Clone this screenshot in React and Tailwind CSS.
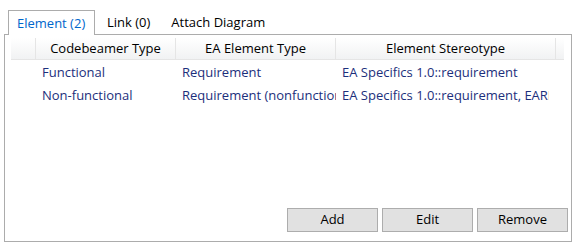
export default function App() {
  const font = { fontFamily: '"Open Sans", "Noto Sans", sans-serif' };
  return (
    <div className="w-[576px] h-[242px] bg-white text-[13px] text-black overflow-hidden flex flex-col" style={font}>
      <div className="flex items-end h-[34px] pl-[8px] relative z-10">
        <div className="w-[87px] h-[25px] border border-b-0 border-[#acacac] bg-white flex items-center pl-[8px] pt-[2px] text-[#0066cc] -mb-[1px]">Element (2)</div>
        <div className="h-[24px] flex items-center pl-[12px] pr-[6px] pt-[1px]">Link (0)</div>
        <div className="h-[24px] flex items-center pl-[15px] pt-[1px]">Attach Diagram</div>
      </div>
      <div className="mx-[4px] h-[208px] border border-[#acacac] flex flex-col pl-[6px] pr-[3px] pt-[3px] pb-[9px]">
        <div className="flex-1 flex flex-col">
          <div className="flex h-[22px] w-[553px] bg-gradient-to-b from-white to-[#f1f2f3] border-b border-[#e5e5e5]">
            <div className="w-[25px] border-r border-[#e5e5e5]"></div>
            <div className="w-[140px] border-r border-[#e5e5e5] flex items-center justify-center pt-[1px] whitespace-nowrap">Codebeamer Type</div>
            <div className="w-[160px] border-r border-[#e5e5e5] flex items-center justify-center pt-[1px] whitespace-nowrap">EA Element Type</div>
            <div className="w-[220px] border-r border-[#e5e5e5] flex items-center justify-center pt-[1px] whitespace-nowrap">Element Stereotype</div>
            <div className="flex-1"></div>
          </div>
          {[
            ["Functional", "Requirement", "EA Specifics 1.0::requirement"],
            ["Non-functional", "Requirement (nonfunctional)", "EA Specifics 1.0::requirement, EAREQ::NonFunctional"],
          ].map((r, i) => (
            <div key={i} className="flex h-[23px] items-center pt-[2px] text-[#1c2f7c]">
              <div className="w-[25px] shrink-0"></div>
              <div className="w-[140px] shrink-0 pl-[6px] overflow-hidden whitespace-nowrap">{r[0]}</div>
              <div className="w-[160px] shrink-0 pl-[6px] overflow-hidden whitespace-nowrap">{r[1]}</div>
              <div className="w-[213px] shrink-0 pl-[6px] overflow-hidden whitespace-nowrap">{r[2]}</div>
            </div>
          ))}
        </div>
        <div className="flex justify-end gap-[4px]">
          {["Add", "Edit", "Remove"].map((b) => (
            <div key={b} className="w-[91px] h-[24px] bg-[#e1e1e1] border border-[#adadad] flex items-center justify-center">{b}</div>
          ))}
        </div>
      </div>
    </div>
  );
}
